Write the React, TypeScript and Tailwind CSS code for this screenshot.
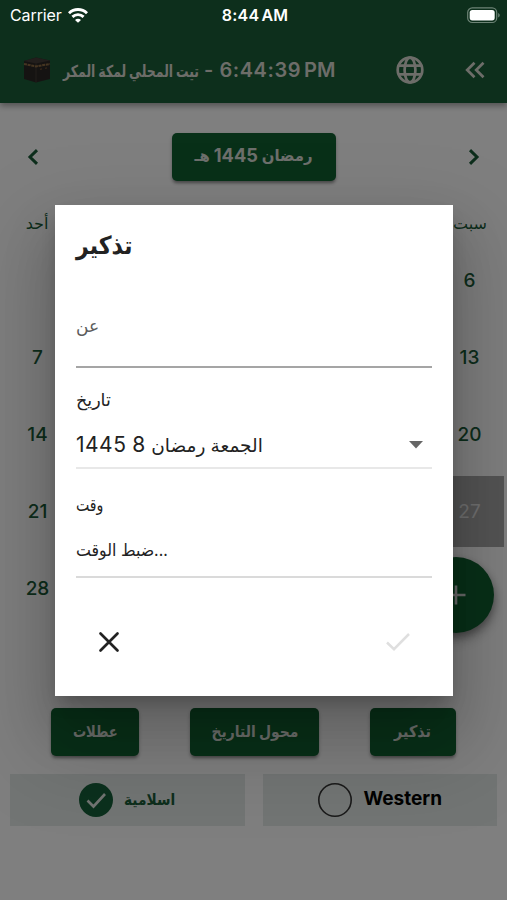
import React from 'react';

const weeks = [
  { sunday: '', saturday: '6' },
  { sunday: '7', saturday: '13' },
  { sunday: '14', saturday: '20' },
  { sunday: '21', saturday: '27', selected: true },
  { sunday: '28', saturday: '' },
];

const Kaaba = () => (
  <svg className="shrink-0" width="28" height="26" viewBox="0 0 28 26">
    <path d="M1 4 L13 0.5 L27 3.5 L27 22 L13 25.5 L1 22Z" fill="#2b2725" />
    <path d="M1 4 L13 0.5 L27 3.5 L13 6.5Z" fill="#443c38" />
    <path d="M13 6.5 V25.5" stroke="#453b36" strokeWidth="1" />
    <path d="M1 7 L13 9.4 L27 7" stroke="#8a6a42" strokeWidth="2" fill="none" strokeDasharray="3 0.7" />
    <path d="M17 12.3 L19 11.9 M22 11.3 L24 10.9" stroke="#6b4d32" strokeWidth="1.2" />
  </svg>
);

const StatusBar = () => (
  <div className="absolute inset-x-0 top-0 z-30 flex h-[30px] items-center justify-between pl-[10px] pr-[7px] text-white">
    <div className="flex flex-1 items-center gap-[6px]">
      <span className="text-[16px] leading-[30px] tracking-[-0.1px]">Carrier</span>
      <svg width="20" height="15" viewBox="0 0 20 15" fill="none" stroke="white" strokeWidth="2.9">
        <path d="M1 5.2 C6 0.3 14 0.3 19 5.2" />
        <path d="M4.4 8.9 C7.6 5.9 12.4 5.9 15.6 8.9" />
        <path d="M10 14.8 L7 11.9 C8.7 10.3 11.3 10.3 13 11.9Z" fill="white" stroke="none" />
      </svg>
    </div>
    <span className="whitespace-nowrap text-[16px] font-semibold leading-[30px] tracking-[0.25px]">
      8:44<span className="ml-[2px]">AM</span>
    </span>
    <div className="flex flex-1 justify-end">
      <svg width="33" height="17" viewBox="0 0 33 17">
        <rect x="0.7" y="0.9" width="29" height="14.6" rx="4.6" fill="none" stroke="#6d8476" strokeWidth="1.2" />
        <rect x="2.7" y="3" width="25" height="10.4" rx="2.6" fill="white" />
        <path d="M31.2 6 C33.2 6.8 33.2 9.6 31.2 10.4Z" fill="#6d8476" />
      </svg>
    </div>
  </div>
);

const GreenButton = ({ className, children }: { className: string; children: React.ReactNode }) => (
  <button
    dir="rtl"
    className={`flex h-12 items-center justify-center whitespace-nowrap rounded-[5px] bg-[#116031] pb-[3px] font-bold text-[#dadfd8] shadow-[0_3px_3px_-1px_rgba(0,0,0,0.3),0_2px_4px_rgba(0,0,0,0.2)] ${className}`}
  >
    {children}
  </button>
);

const Header = () => (
  <header className="relative flex h-[103px] items-center bg-[#1a5f39] pl-[23px] pr-[21px] pt-[37px] text-[#dbdbd3] shadow-[0_3px_6px_rgba(0,0,0,0.35)]">
    <Kaaba />
    <span dir="rtl" className="ml-[11px] w-[137px] whitespace-nowrap text-right text-[16.5px] font-bold">
      <span className="relative top-[1px] inline-block origin-right scale-x-[0.755]">تيت المحلي لمكة المكر</span>
    </span>
    <span className="ml-[5px] whitespace-nowrap text-[20px] font-semibold tracking-[0.55px]">
      - 6:44:39<span className="ml-[3px] tracking-normal">PM</span>
    </span>
    <svg className="absolute left-[396px] top-[56px]" width="28" height="28" viewBox="0 0 28 28" fill="none" stroke="currentColor" strokeWidth="2.7">
      <circle cx="14" cy="14" r="12.3" />
      <ellipse cx="14" cy="14" rx="5.4" ry="12.3" />
      <path d="M2.5 9.7 H25.5 M2.5 18.3 H25.5" />
    </svg>
    <svg className="ml-auto" width="22" height="20" viewBox="0 0 22 20" fill="none" stroke="currentColor" strokeWidth="2.7">
      <path d="M10.5 2.7 L3.2 10 L10.5 17.3 M19.5 2.7 L12.2 10 L19.5 17.3" />
    </svg>
  </header>
);

const ReminderDialog = () => (
  <div className="absolute left-[55px] top-[205px] z-20 flex h-[491px] w-[398px] flex-col bg-white px-[21px] text-[#222] shadow-[0_10px_16px_-4px_rgba(0,0,0,0.22),0_30px_46px_6px_rgba(0,0,0,0.12),0_40px_80px_24px_rgba(0,0,0,0.13)]">
    <h2 className="mt-[18px] h-[44px] text-[25px] font-bold leading-[44px]">
      <span className="inline-block origin-left scale-x-[0.88]">تذكير</span>
    </h2>
    <div className="mt-[40px] h-[61px] border-b-2 border-[#a5a5a5] text-[17px] leading-[38px] text-[#5c5c5c]">عن</div>
    <label className="mt-[18px] h-[28px] text-[17.5px] leading-[28px]">تاريخ</label>
    <div className="mt-[10px] flex h-[45px] items-center justify-between border-b-2 border-[#e8e8e8] pb-[1px] pr-[9px]">
      <span dir="rtl" className="whitespace-nowrap text-[21px] leading-[42px]">
        <span className="inline-block text-[18.5px]">الجمعة رمضان</span> 8{' '}
        <span className="tracking-[0.5px]">1445</span>
      </span>
      <svg width="14" height="8" viewBox="0 0 14 8">
        <path d="M0 0 H14 L7 7.5Z" fill="#666" />
      </svg>
    </div>
    <label className="mt-[22px] h-[28px] text-[17px] leading-[28px]">
      <span className="inline-block origin-left scale-x-[0.83]">وقت</span>
    </label>
    <div className="mt-[11px] h-[48px] border-b-2 border-[#dadada] text-[17px] leading-[40px]">
      <span className="inline-block origin-left scale-x-[0.93]"><bdi>ضبط الوقت</bdi>...</span>
    </div>
    <div className="mt-[53px] flex items-center justify-between px-[22px]">
      <svg width="22" height="22" viewBox="0 0 22 22" fill="none" stroke="#222" strokeWidth="2.7" strokeLinecap="round">
        <path d="M2.5 2.5 L19.5 19.5 M19.5 2.5 L2.5 19.5" />
      </svg>
      <svg width="24" height="18" viewBox="0 0 24 18" fill="none" stroke="#dfdfdf" strokeWidth="2.5">
        <path d="M1 9.5 L8 16.2 L23 1" />
      </svg>
    </div>
  </div>
);

const App: React.FC = () => {
  return (
    <div className="relative h-[900px] w-[507px] overflow-hidden bg-white font-['Inter','DejaVu_Sans',sans-serif] text-[#1b5c39]">
      <Header />

      {/* Month switcher */}
      <div className="mt-[30px] flex h-12 items-center justify-between px-[27px]">
        <svg width="12" height="16" viewBox="0 0 12 16" fill="none" stroke="currentColor" strokeWidth="3">
          <path d="M10 1.2 L3 8 L10 14.8" />
        </svg>
        <GreenButton className="w-[164px] text-[19px]">
          <span className="flex origin-center scale-x-[0.96] items-center gap-[4px]">
            <span className="text-[15.5px]">رمضان</span>
            <span className="pt-[2px]">1445</span>
            <span className="text-[15.5px]">هـ</span>
          </span>
        </GreenButton>
        <svg width="12" height="16" viewBox="0 0 12 16" fill="none" stroke="currentColor" strokeWidth="3">
          <path d="M2 1.2 L9 8 L2 14.8" />
        </svg>
      </div>

      {/* Calendar */}
      <div className="mt-[26px] flex h-[32px] items-center justify-between px-[1px] text-[16px]">
        <span className="w-[72px] text-center">أحد</span>
        <span className="w-[72px] text-center">سبت</span>
      </div>
      <div className="mt-[6px] flex flex-col gap-[6px] px-[3px]">
        {weeks.map((week, i) => (
          <div key={i} className="flex h-[71px] justify-between text-[19px] font-medium leading-[72px]">
            <span className="w-[69px] text-center">{week.sunday}</span>
            <span className={`w-[69px] text-center ${week.selected ? 'bg-[#a9a9a9] font-normal text-[#e0e0e0]' : ''}`}>
              {week.saturday}
            </span>
          </div>
        ))}
      </div>

      <button className="absolute left-[418px] top-[557px] flex size-[76px] items-center justify-center rounded-full bg-[#116031] shadow-[0_4px_8px_rgba(0,0,0,0.35),0_8px_14px_rgba(0,0,0,0.2)]">
        <svg width="20" height="20" viewBox="0 0 20 20" stroke="#d5d5d5" strokeWidth="2.6">
          <path d="M10 0.5 V19.5 M0.5 10 H19.5" />
        </svg>
      </button>

      <div className="mt-[84px] flex pl-[51px]">
        <GreenButton className="w-[88px] text-[16px]">
          <span className="inline-block scale-x-[0.82]">عطلات</span>
        </GreenButton>
        <GreenButton className="ml-[51px] w-[129px] text-[16px]">
          <span className="inline-block scale-x-[0.87]">محول التاريخ</span>
        </GreenButton>
        <GreenButton className="ml-[51px] w-[86px] text-[16px]">
          <span className="inline-block scale-x-[0.9]">تذكير</span>
        </GreenButton>
      </div>

      {/* Calendar type */}
      <div className="mt-[18px] flex gap-[18px] px-[10px] font-bold">
        <div className="flex h-[52px] w-[235px] items-center bg-[#e5ebe8] pl-[69px]">
          <svg width="34" height="34" viewBox="0 0 34 34" fill="none">
            <circle cx="17" cy="17" r="17" fill="#17603a" />
            <path d="M8.5 17.5 L14.5 23.5 L26 11" stroke="#e2e8e4" strokeWidth="2.6" />
          </svg>
          <span className="ml-[11px] inline-block origin-left scale-x-[0.86] pb-[3px] text-[16px]">اسلامية</span>
        </div>
        <div className="flex h-[52px] w-[235px] items-center bg-[#e5ebe8] pl-[55px] text-black">
          <svg width="34" height="34" viewBox="0 0 34 34" fill="none">
            <circle cx="17" cy="17" r="16.2" stroke="#333" strokeWidth="1.6" />
          </svg>
          <span className="ml-[12px] pb-[2px] text-[19px]">Western</span>
        </div>
      </div>

      <div className="absolute inset-0 z-10 bg-black/50" />
      <ReminderDialog />
      <StatusBar />
    </div>
  );
};

export default App;
